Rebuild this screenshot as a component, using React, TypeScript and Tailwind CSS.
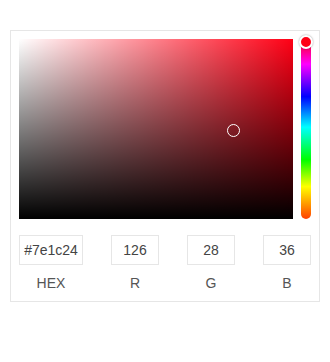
const FIELDS = [
  { label: 'HEX', value: '#7e1c24', width: 'w-[64px]' },
  { label: 'R', value: '126', width: 'w-[48px]' },
  { label: 'G', value: '28', width: 'w-[48px]' },
  { label: 'B', value: '36', width: 'w-[48px]' },
]

export default function App() {
  return (
    <div className="w-[330px] h-[362px] bg-white pt-[30px] pl-[10px]" style={{ fontFamily: '"Liberation Sans", Arial, sans-serif' }}>
      <div className="w-[310px] border border-[#e6e6e6] p-2">
        {/* Saturation + hue */}
        <div className="flex gap-2 h-[180px]">
          <div className="relative flex-1 bg-[#ff0015]">
            <div className="absolute inset-0 bg-gradient-to-r from-white to-transparent" />
            <div className="absolute inset-0 bg-gradient-to-t from-black to-transparent" />
            <div className="absolute left-[208px] top-[85px] w-[13px] h-[13px] rounded-full border border-white" />
          </div>
          <div className="relative w-[10px] rounded-full bg-[linear-gradient(to_bottom,#ff0015_0%,#ff00ff_14%,#0000ff_32%,#00ffff_49%,#00ff00_67%,#ffff00_82%,#ff4000_100%)]">
            <div className="absolute left-[-2px] top-[-4px] w-[14px] h-[14px] rounded-full bg-[#ff0015] border-2 border-white shadow-[0_0_2px_rgba(0,0,0,0.4)]" />
          </div>
        </div>

        {/* Inputs */}
        <div className="flex justify-between mt-4">
          {FIELDS.map((f) => (
            <div key={f.label} className={`${f.width} flex flex-col items-center`}>
              <div className="w-full h-[30px] border border-[#e6e6e6] flex items-center justify-center text-[14px] text-[#444]">
                {f.value}
              </div>
              <div className="mt-2 h-5 leading-5 text-[14px] text-[#555]">{f.label}</div>
            </div>
          ))}
        </div>
      </div>
    </div>
  )
}
